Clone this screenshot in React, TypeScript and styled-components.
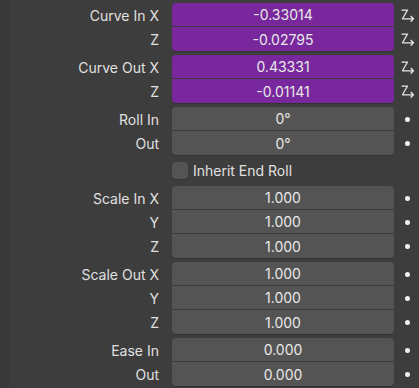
import React from "react";
import styled, { createGlobalStyle, css } from "styled-components";

const GlobalStyle = createGlobalStyle`
  html, body {
    margin: 0;
    padding: 0;
    background: #3d3d3d;
  }
  body {
    font-family: Inter, "Noto Sans", "DejaVu Sans", sans-serif;
  }
`;

const Page = styled.div`
  width: 419px;
  height: 388px;
  box-sizing: border-box;
  background: #3d3d3d;
  border-left: 9px solid #393939;
  padding-top: 3px;
  display: flex;
  flex-direction: column;
  gap: 4px;
  overflow: hidden;
`;

const Group = styled.div`
  display: flex;
  flex-direction: column;
`;

const Row = styled.div`
  display: grid;
  grid-template-columns: 163px 222px 25px;
  height: 24px;
  align-items: stretch;
`;

const Label = styled.div`
  display: flex;
  align-items: center;
  justify-content: flex-end;
  padding-right: 13px;
  color: #e0e0e0;
  font-size: 14px;
  white-space: nowrap;
`;

type FieldProps = { $first: boolean; $last: boolean; $driven: boolean };

const Field = styled.div<FieldProps>`
  box-sizing: border-box;
  display: flex;
  align-items: center;
  justify-content: center;
  background: ${(p) => (p.$driven ? "#78289c" : "#545454")};
  color: #e8e8e8;
  font-size: 14px;
  border-bottom: ${(p) => (p.$last ? "none" : "1px solid #3b3b3b")};
  border-radius: ${(p) =>
    `${p.$first ? "4px 4px" : "0 0"} ${p.$last ? "4px 4px" : "0 0"}`};
  ${(p) =>
    p.$last &&
    css`
      box-shadow: 0 1px 0 rgba(0, 0, 0, 0.18);
    `}
`;

const Decorator = styled.div`
  display: flex;
  align-items: center;
  justify-content: center;
  padding-left: 1px;
`;

const Dot = styled.span`
  width: 5px;
  height: 5px;
  border-radius: 50%;
  background: #f0f0f0;
`;

const CheckRow = styled.div`
  display: grid;
  grid-template-columns: 163px auto;
  height: 23px;
  align-items: center;
`;

const CheckLabel = styled.label`
  display: flex;
  align-items: center;
  gap: 5px;
  color: #e0e0e0;
  font-size: 14px;
`;

const Box = styled.span`
  width: 16px;
  height: 17px;
  box-sizing: border-box;
  border-radius: 4px;
  background: #545454;
  box-shadow: 0 1px 0 rgba(0, 0, 0, 0.15);
`;

const DriverIcon = () => (
  <svg width="16" height="16" viewBox="0 0 16 16" fill="none">
    <path
      d="M3 3 H8.5 L3.5 11.8 H14.5 M12 9.3 L14.5 11.8 L12 14.3"
      stroke="#e6e6e6"
      strokeWidth="1.25"
      strokeLinecap="round"
      strokeLinejoin="round"
    />
  </svg>
);

type Item = { label: string; value: string };

const PropGroup = ({ items, driven }: { items: Item[]; driven?: boolean }) => (
  <Group>
    {items.map((it, i) => (
      <Row key={i}>
        <Label>{it.label}</Label>
        <Field
          $first={i === 0}
          $last={i === items.length - 1}
          $driven={!!driven}
        >
          {it.value}
        </Field>
        <Decorator>{driven ? <DriverIcon /> : <Dot />}</Decorator>
      </Row>
    ))}
  </Group>
);

export default function App() {
  return (
    <>
      <GlobalStyle />
      <Page>
        <PropGroup
          driven
          items={[
            { label: "Curve In X", value: "-0.33014" },
            { label: "Z", value: "-0.02795" },
          ]}
        />
        <PropGroup
          driven
          items={[
            { label: "Curve Out X", value: "0.43331" },
            { label: "Z", value: "-0.01141" },
          ]}
        />
        <PropGroup
          items={[
            { label: "Roll In", value: "0°" },
            { label: "Out", value: "0°" },
          ]}
        />
        <CheckRow>
          <span />
          <CheckLabel>
            <Box />
            Inherit End Roll
          </CheckLabel>
        </CheckRow>
        <PropGroup
          items={[
            { label: "Scale In X", value: "1.000" },
            { label: "Y", value: "1.000" },
            { label: "Z", value: "1.000" },
          ]}
        />
        <PropGroup
          items={[
            { label: "Scale Out X", value: "1.000" },
            { label: "Y", value: "1.000" },
            { label: "Z", value: "1.000" },
          ]}
        />
        <PropGroup
          items={[
            { label: "Ease In", value: "0.000" },
            { label: "Out", value: "0.000" },
          ]}
        />
      </Page>
    </>
  );
}
